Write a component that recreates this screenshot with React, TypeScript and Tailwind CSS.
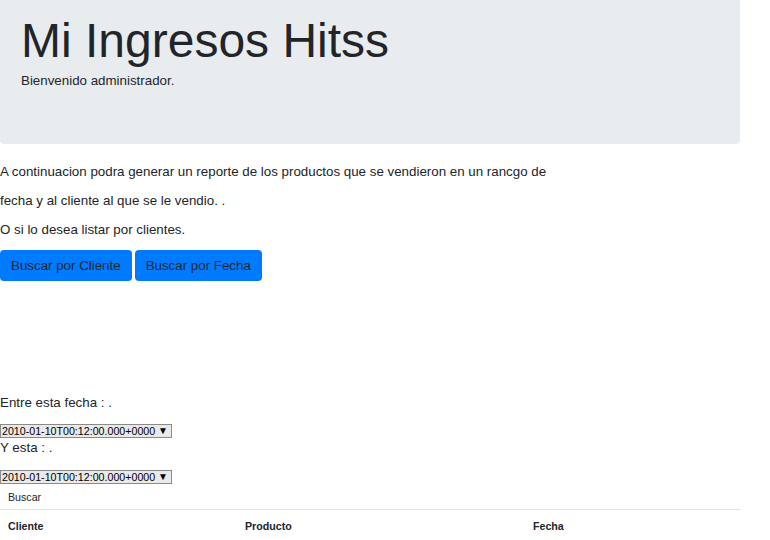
import React from "react";

const font = { fontFamily: '"Liberation Sans", Arial, sans-serif' };

function FakeSelect() {
  return (
    <div className="flex h-[14px] w-[172px] items-center justify-between border border-[#8a8a8a] bg-[#e9e9e9] pl-[1px] pr-[3px] text-[10.67px] leading-[12px] text-black">
      <span>2010-01-10T00:12:00.000+0000</span>
      <span className="text-[10px] leading-[12px]">▼</span>
    </div>
  );
}

export default function App() {
  return (
    <div className="min-h-[540px] w-[770px] bg-white text-[#212529]" style={font}>
      <div className="h-[144px] w-[740px] rounded-b-[4px] bg-[#e9ecef] pl-[21px] pt-[12px]">
        <h1 className="text-[48px] leading-[57.6px] font-normal">Mi Ingresos Hitss</h1>
        <p className="mt-[1px] text-[13.33px] leading-[20px]">Bienvenido administrador.</p>
      </div>

      <div className="pt-[18px] text-[13.33px] leading-[20px]">
        <p className="mb-[9px]">
          A continuacion podra generar un reporte de los productos que se vendieron en un rancgo de
        </p>
        <p className="mb-[9px]">fecha y al cliente al que se le vendio. .</p>
        <p>O si lo desea listar por clientes.</p>
        <div className="mt-[10px] flex gap-[3px]">
          <button className="h-[31px] rounded-[4px] bg-[#007bff] px-[11px] text-[13.33px] text-[#212529]">
            Buscar por Cliente
          </button>
          <button className="h-[31px] rounded-[4px] bg-[#007bff] px-[11px] text-[13.33px] text-[#212529]">
            Buscar por Fecha
          </button>
        </div>

        <p className="mt-[112px]">Entre esta fecha : .</p>
        <div className="mt-[11px]">
          <FakeSelect />
        </div>
        <p>Y esta : .</p>
        <div className="mt-[12px]">
          <FakeSelect />
        </div>
        <div className="mt-[5px] pl-[8px] text-[10.67px] leading-[16px]">Buscar</div>

        <div className="mt-[4px] w-[740px] border-t border-[#dee2e6]">
          <div className="grid grid-cols-[237px_288px_1fr] pl-[8px] pt-[8px] text-[10.67px] font-bold leading-[16px]">
            <span>Cliente</span>
            <span>Producto</span>
            <span>Fecha</span>
          </div>
        </div>
      </div>
    </div>
  );
}
